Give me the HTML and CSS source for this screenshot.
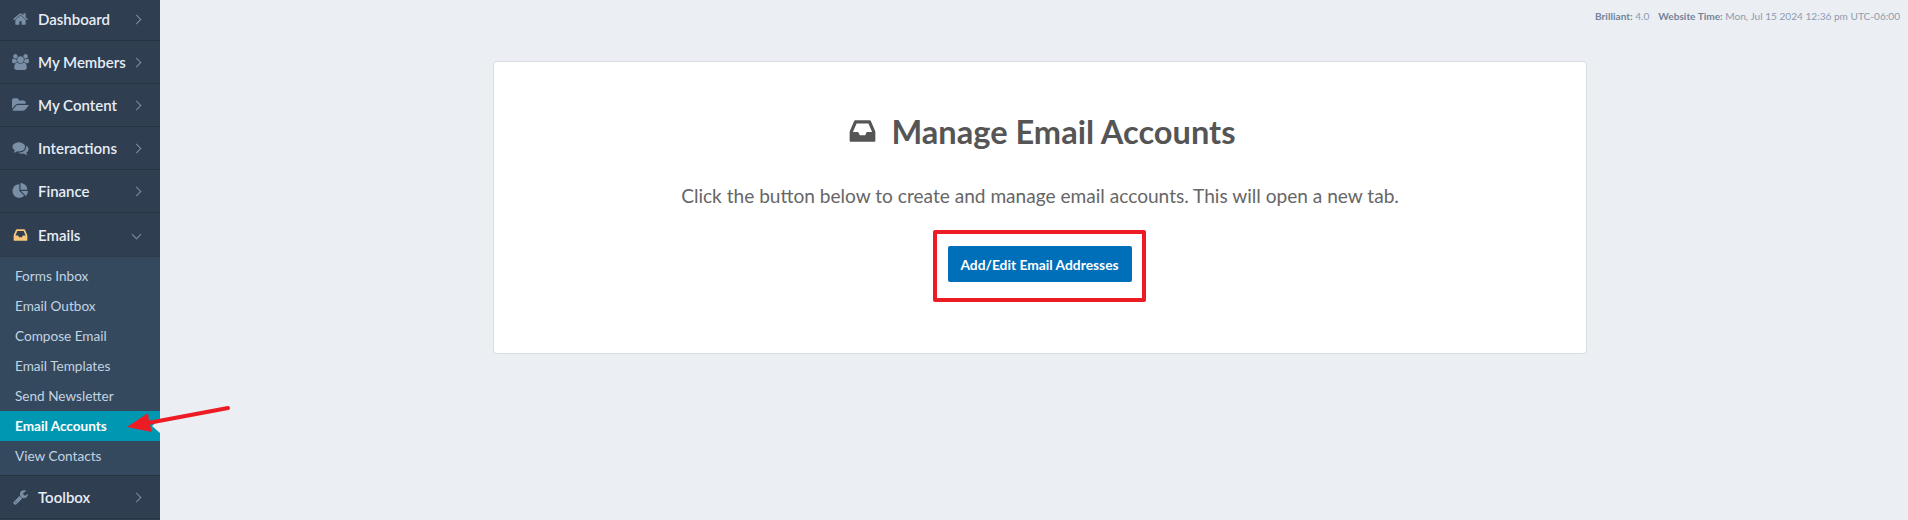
FILE: index.html
```html
<!DOCTYPE html>
<html>

<head>
    <meta charset="UTF-8">
    <title>Manage Email Accounts</title>
    <link rel="stylesheet" href="styles.css">
</head>

<body>
    <svg class="icon-defs" xmlns="http://www.w3.org/2000/svg">
        <symbol id="i-home" viewBox="0 0 1792 1792"><path d="M1472 992v480q0 26-19 45t-45 19h-384v-384h-256v384h-384q-26 0-45-19t-19-45v-480q0-1 .5-3t.5-3l575-474 575 474q1 2 1 6zm223-69l-62 74q-8 9-21 11h-3q-13 0-21-7l-692-577-692 577q-12 8-24 7-13-2-21-11l-62-74q-8-10-7-23.500t11-21.500l719-599q32-26 76-26t76 26l244 204v-195q0-14 9-23t23-9h192q14 0 23 9t9 23v408l219 182q10 8 11 21.500t-7 23.500z"/></symbol>
        <symbol id="i-users" viewBox="0 0 1920 1792"><path d="M593 896q-162 5-265 128h-134q-82 0-138-40.500t-56-118.500q0-353 124-353 6 0 43.500 21t97.500 42.500 119 21.500q67 0 133-23-5 37-5 66 0 139 81 256zm1071 637q0 120-73 189.500t-194 69.500h-874q-121 0-194-69.500t-73-189.500q0-53 3.500-103.500t14-109 26.500-108.500 43-97.500 62-81 85.500-53.500 111.500-20q10 0 43 21.500t73 48 107 48 135 21.500 135-21.500 107-48 73-48 43-21.500q61 0 111.500 20t85.500 53.500 62 81 43 97.500 26.500 108.500 14 109 3.500 103.500zm-1024-1277q0 106-75 181t-181 75-181-75-75-181 75-181 181-75 181 75 75 181zm704 384q0 159-112.500 271.500t-271.500 112.500-271.500-112.500-112.500-271.500 112.500-271.500 271.500-112.500 271.500 112.500 112.500 271.500zm576 225q0 78-56 118.500t-138 40.500h-134q-103-123-265-128 81-117 81-256 0-29-5-66 66 23 133 23 59 0 119-21.500t97.500-42.500 43.500-21q124 0 124 353zm-128-609q0 106-75 181t-181 75-181-75-75-181 75-181 181-75 181 75 75 181z"/></symbol>
        <symbol id="i-folder" viewBox="0 0 1920 1792"><path d="M1879 952q0 31-31 66l-336 396q-43 51-120.500 86.500t-143.500 35.500h-1088q-34 0-60.500-13t-26.500-43q0-31 31-66l336-396q43-51 120.500-86.500t143.500-35.500h1088q34 0 60.500 13t26.500 43zm-343-344v160h-832q-94 0-197 47.500t-164 119.500l-337 396-5 6q0-4-.5-12.500t-.5-12.500v-960q0-92 66-158t158-66h320q92 0 158 66t66 158v32h544q92 0 158 66t66 158z"/></symbol>
        <symbol id="i-comments" viewBox="0 0 1792 1792"><path d="M1408 768q0 139-94 257t-256.500 186.500-353.500 68.500q-86 0-176-16-124 88-278 128-36 9-86 16h-3q-11 0-20.500-8t-11.500-21q-1-3-1-6.500t.5-6.500 2-6l2.500-5 3.500-5.500 4-5 4.500-5 4-4.500q5-6 23-25t26-29.500 22.500-29 25-38.500 20.500-44q-124-72-195-177t-71-224q0-139 94-257t256.500-186.500 353.500-68.500 353.500 68.500 256.500 186.500 94 257zm384 256q0 120-71 224.500t-195 176.500q10 24 20.500 44t25 38.500 22.500 29 26 29.500 23 25q1 1 4 4.500t4.500 5 4 5 3.500 5.500l2.500 5 2 6 .5 6.500-1 6.500q-3 14-13 22t-22 7q-50-7-86-16-154-40-278-128-90 16-176 16-271 0-472-132 58 4 88 4 161 0 309-45t264-129q125-92 192-212t67-254q0-77-23-152 129 71 204 178t75 230z"/></symbol>
        <symbol id="i-pie" viewBox="0 0 1792 1792"><path d="M768 890l546 546q-106 108-247.500 168t-298.500 60q-209 0-385.500-103t-279.500-279.500-103-385.500 103-385.500 279.500-279.500 385.500-103v762zm187 6h773q0 157-60 298.500t-168 247.500zm709-128h-768v-768q209 0 385.500 103t279.500 279.500 103 385.500z"/></symbol>
        <symbol id="i-inbox" viewBox="0 0 1536 1792"><path d="M1023 960h316q-1-3-2.500-8.500t-2.500-7.500l-212-496h-708l-212 496q-1 3-2.500 8.500t-2.500 7.500h316l95 192h320zm513 30v482q0 26-19 45t-45 19h-1408q-26 0-45-19t-19-45v-482q0-62 25-123l238-552q10-25 36.500-42t52.500-17h832q26 0 52.500 17t36.500 42l238 552q25 61 25 123z"/></symbol>
        <symbol id="i-wrench" viewBox="0 0 1792 1792"><path d="M448 1472q0-26-19-45t-45-19-45 19-19 45 19 45 45 19 45-19 19-45zm644-420l-682 682q-37 37-90 37-52 0-91-37l-106-108q-38-36-38-90 0-53 38-91l681-681q39 98 114.500 173.500t173.500 114.500zm634-435q0 39-23 106-47 134-164.500 217.500t-258.500 83.500q-185 0-316.500-131.500t-131.500-316.500 131.500-316.500 316.500-131.500q58 0 121.500 16.500t107.500 46.500q16 11 16 28t-16 28l-293 169v224l193 107q5-3 79-48.500t135.500-81 70.500-35.500q15 0 23.500 10t8.500 25z"/></symbol>
    </svg>

    <div class="layout">
        <div class="sidebar">
            <ul class="nav">
                <li class="nav-item">
                    <svg class="nav-icon"><use href="#i-home"/></svg>
                    <span class="nav-label">Dashboard</span>
                    <span class="chev"></span>
                </li>
                <li class="nav-item">
                    <svg class="nav-icon"><use href="#i-users"/></svg>
                    <span class="nav-label">My Members</span>
                    <span class="chev"></span>
                </li>
                <li class="nav-item">
                    <svg class="nav-icon"><use href="#i-folder"/></svg>
                    <span class="nav-label">My Content</span>
                    <span class="chev"></span>
                </li>
                <li class="nav-item">
                    <svg class="nav-icon"><use href="#i-comments"/></svg>
                    <span class="nav-label">Interactions</span>
                    <span class="chev"></span>
                </li>
                <li class="nav-item">
                    <svg class="nav-icon"><use href="#i-pie"/></svg>
                    <span class="nav-label">Finance</span>
                    <span class="chev"></span>
                </li>
                <li class="nav-item open">
                    <svg class="nav-icon"><use href="#i-inbox"/></svg>
                    <span class="nav-label">Emails</span>
                    <span class="chev down"></span>
                </li>
                <li>
                    <ul class="subnav">
                        <li>Forms Inbox</li>
                        <li>Email Outbox</li>
                        <li>Compose Email</li>
                        <li>Email Templates</li>
                        <li>Send Newsletter</li>
                        <li class="active">Email Accounts</li>
                        <li>View Contacts</li>
                    </ul>
                </li>
                <li class="nav-item">
                    <svg class="nav-icon"><use href="#i-wrench"/></svg>
                    <span class="nav-label">Toolbox</span>
                    <span class="chev"></span>
                </li>
            </ul>
        </div>

        <div class="main">
            <div class="topbar">
                <span><b>Brilliant:</b> 4.0</span>
                <span><b>Website Time:</b> Mon, Jul 15 2024 12:36 pm UTC-06:00</span>
            </div>
            <div class="card">
                <h1><svg class="title-icon"><use href="#i-inbox"/></svg>Manage Email Accounts</h1>
                <p>Click the button below to create and manage email accounts. This will open a new tab.</p>
                <div class="highlight">
                    <button class="btn-primary">Add/Edit Email Addresses</button>
                </div>
            </div>
        </div>
    </div>

    <!-- red arrow drawn over the screenshot -->
    <svg class="annotation" width="120" height="50" viewBox="0 0 120 50">
        <path d="M28 23 L108 8" stroke="#ed1c24" stroke-width="4" stroke-linecap="round" fill="none"/>
        <path d="M7 27 L28 13 L29 21 L32 32 Z" fill="#ed1c24"/>
    </svg>
</body>

</html>
```

FILE: styles.css
```css
* {
    box-sizing: border-box;
}

html, body {
    margin: 0;
    height: 520px;
    overflow: hidden;
}

body {
    font-family: Lato, "Open Sans", Arial, sans-serif;
    background-color: #ebeef3;
    position: relative;
}

.icon-defs {
    display: none;
}

.layout {
    display: flex;
    height: 520px;
}

/* sidebar */
.sidebar {
    width: 160px;
    flex-shrink: 0;
    background-color: #2f3e50;
}

.nav, .subnav {
    list-style: none;
    margin: 0;
    padding: 0;
}

.nav {
    margin-top: -2px;
}

.nav-item {
    display: flex;
    align-items: center;
    height: 43px;
    padding-left: 12px;
    border-bottom: 1px solid #263442;
    color: #e6edf5;
    font-size: 15px;
    font-weight: 600;
}

.nav-item.open {
    border-bottom: none;
}

.nav-icon {
    width: 17px;
    height: 16px;
    margin-right: 9px;
    fill: #7a8fa6;
    flex-shrink: 0;
}

.open .nav-icon {
    fill: #f7c77e;
}

.nav-label {
    flex: 1;
}

.chev {
    width: 7px;
    height: 7px;
    margin-right: 20px;
    border-top: 1px solid #7a8fa6;
    border-right: 1px solid #7a8fa6;
    transform: rotate(45deg);
}

.chev.down {
    transform: rotate(135deg);
    margin-right: 20px;
}

.subnav {
    background-color: #34495e;
    padding: 4px 0;
    border-top: 1px solid #2c3a4a;
    border-bottom: 1px solid #263442;
}

.subnav li {
    height: 30px;
    line-height: 30px;
    padding-left: 15px;
    color: #c3d3e2;
    font-size: 13.6px;
}

.subnav li.active {
    position: relative;
    background-color: #0097b2;
    color: white;
    font-weight: 700;
}

.subnav li.active::after {
    content: "";
    position: absolute;
    right: 0;
    top: 8px;
    border-top: 7px solid transparent;
    border-bottom: 7px solid transparent;
    border-right: 8px solid #ebeef3;
}

/* main area */
.main {
    flex: 1;
    padding-left: 333px;
}

.topbar {
    display: flex;
    justify-content: flex-end;
    gap: 9px;
    height: 61px;
    padding: 10px 8px 0 0;
    color: #8d9cb0;
    font-size: 10.1px;
}

.topbar b {
    color: #73849a;
}

.card {
    width: 1094px;
    height: 293px;
    padding-top: 49px;
    background: white;
    border: 1px solid #d8dce3;
    border-radius: 4px;
    text-align: center;
}

h1 {
    display: flex;
    align-items: center;
    justify-content: center;
    margin: 0;
    padding-left: 5px;
    height: 40px;
    color: #555;
    font-size: 32.6px;
    font-weight: 700;
}

.title-icon {
    width: 27px;
    height: 30px;
    margin-right: 15px;
    fill: #555;
}

p {
    margin: 32px 0 0;
    color: #666;
    font-size: 19.1px;
    line-height: 26px;
}

.highlight {
    display: inline-flex;
    margin: 21px 2px 0 0;
    padding: 12px 10px 16px 11px;
    border: 4px solid #ed1c24;
    border-radius: 2px;
}

.btn-primary {
    width: 184px;
    height: 36px;
    padding: 0;
    border: none;
    border-radius: 2px;
    background-color: #006fba;
    color: white;
    font-family: inherit;
    font-size: 13.8px;
    font-weight: 700;
}

.annotation {
    position: absolute;
    left: 120px;
    top: 400px;
}
```
